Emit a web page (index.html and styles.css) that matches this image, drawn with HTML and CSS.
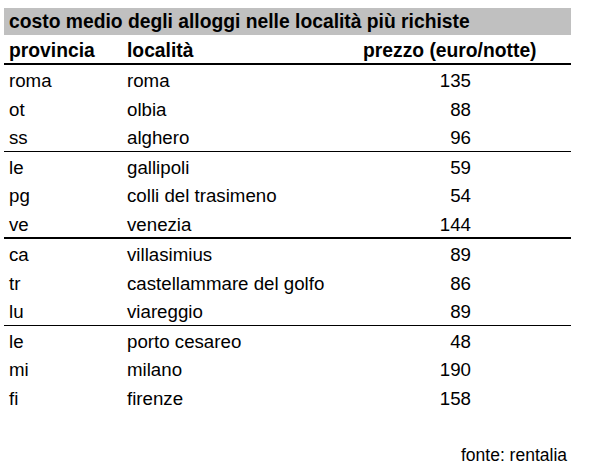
FILE: index.html
```html
<!DOCTYPE html>
<html>
<head>
<meta charset="utf-8">
<link rel="stylesheet" href="styles.css">
</head>
<body>
<div class="sheet">
  <div class="title">costo medio degli alloggi nelle località più richiste</div>
  <div class="row head">
    <span class="c1">provincia</span><span class="c2">località</span><span class="c3">prezzo (euro/notte)</span>
  </div>
  <div class="group g1">
    <div class="row"><span class="c1">roma</span><span class="c2">roma</span><span class="num">135</span></div>
    <div class="row"><span class="c1">ot</span><span class="c2">olbia</span><span class="num">88</span></div>
    <div class="row"><span class="c1">ss</span><span class="c2">alghero</span><span class="num">96</span></div>
  </div>
  <div class="group g2">
    <div class="row"><span class="c1">le</span><span class="c2">gallipoli</span><span class="num">59</span></div>
    <div class="row"><span class="c1">pg</span><span class="c2">colli del trasimeno</span><span class="num">54</span></div>
    <div class="row"><span class="c1">ve</span><span class="c2">venezia</span><span class="num">144</span></div>
  </div>
  <div class="group g3">
    <div class="row"><span class="c1">ca</span><span class="c2">villasimius</span><span class="num">89</span></div>
    <div class="row"><span class="c1">tr</span><span class="c2">castellammare del golfo</span><span class="num">86</span></div>
    <div class="row"><span class="c1">lu</span><span class="c2">viareggio</span><span class="num">89</span></div>
  </div>
  <div class="group g4">
    <div class="row"><span class="c1">le</span><span class="c2">porto cesareo</span><span class="num">48</span></div>
    <div class="row"><span class="c1">mi</span><span class="c2">milano</span><span class="num">190</span></div>
    <div class="row"><span class="c1">fi</span><span class="c2">firenze</span><span class="num">158</span></div>
  </div>
  <div class="source">fonte: rentalia</div>
</div>
</body>
</html>
```

FILE: styles.css
```css
html, body {
  margin: 0;
  padding: 0;
  background: #ffffff;
}
body {
  font-family: "Liberation Sans", Arial, sans-serif;
  font-size: 18.7px;
  color: #000000;
}
.sheet {
  width: 567px;
  margin-left: 4px;
  padding-top: 8px;
}
.title {
  background: #c0c0c0;
  font-weight: bold;
  font-size: 19.3px;
  height: 27px;
  line-height: 28px;
  padding-left: 5px;
}
.row {
  box-sizing: border-box;
  display: flex;
  align-items: center;
  height: 28.5px;
  padding-left: 5px;
  padding-top: 4px;
}
.row.head {
  height: 30px;
  font-weight: bold;
  font-size: 19.3px;
  border-bottom: 2px solid #000;
}
.c1 {
  width: 118px;
  flex: none;
}
.c2 {
  width: 236px;
  flex: none;
}
.c3 {
  flex: none;
}
.num {
  width: 108px;
  text-align: right;
  flex: none;
}
.g1 { border-bottom: 1px solid #000; }
.g2 { border-bottom: 2px solid #000; }
.g3 { border-bottom: 1px solid #000; }
.source {
  text-align: right;
  font-size: 17.5px;
  margin-top: 34px;
  padding-right: 4px;
}
```
